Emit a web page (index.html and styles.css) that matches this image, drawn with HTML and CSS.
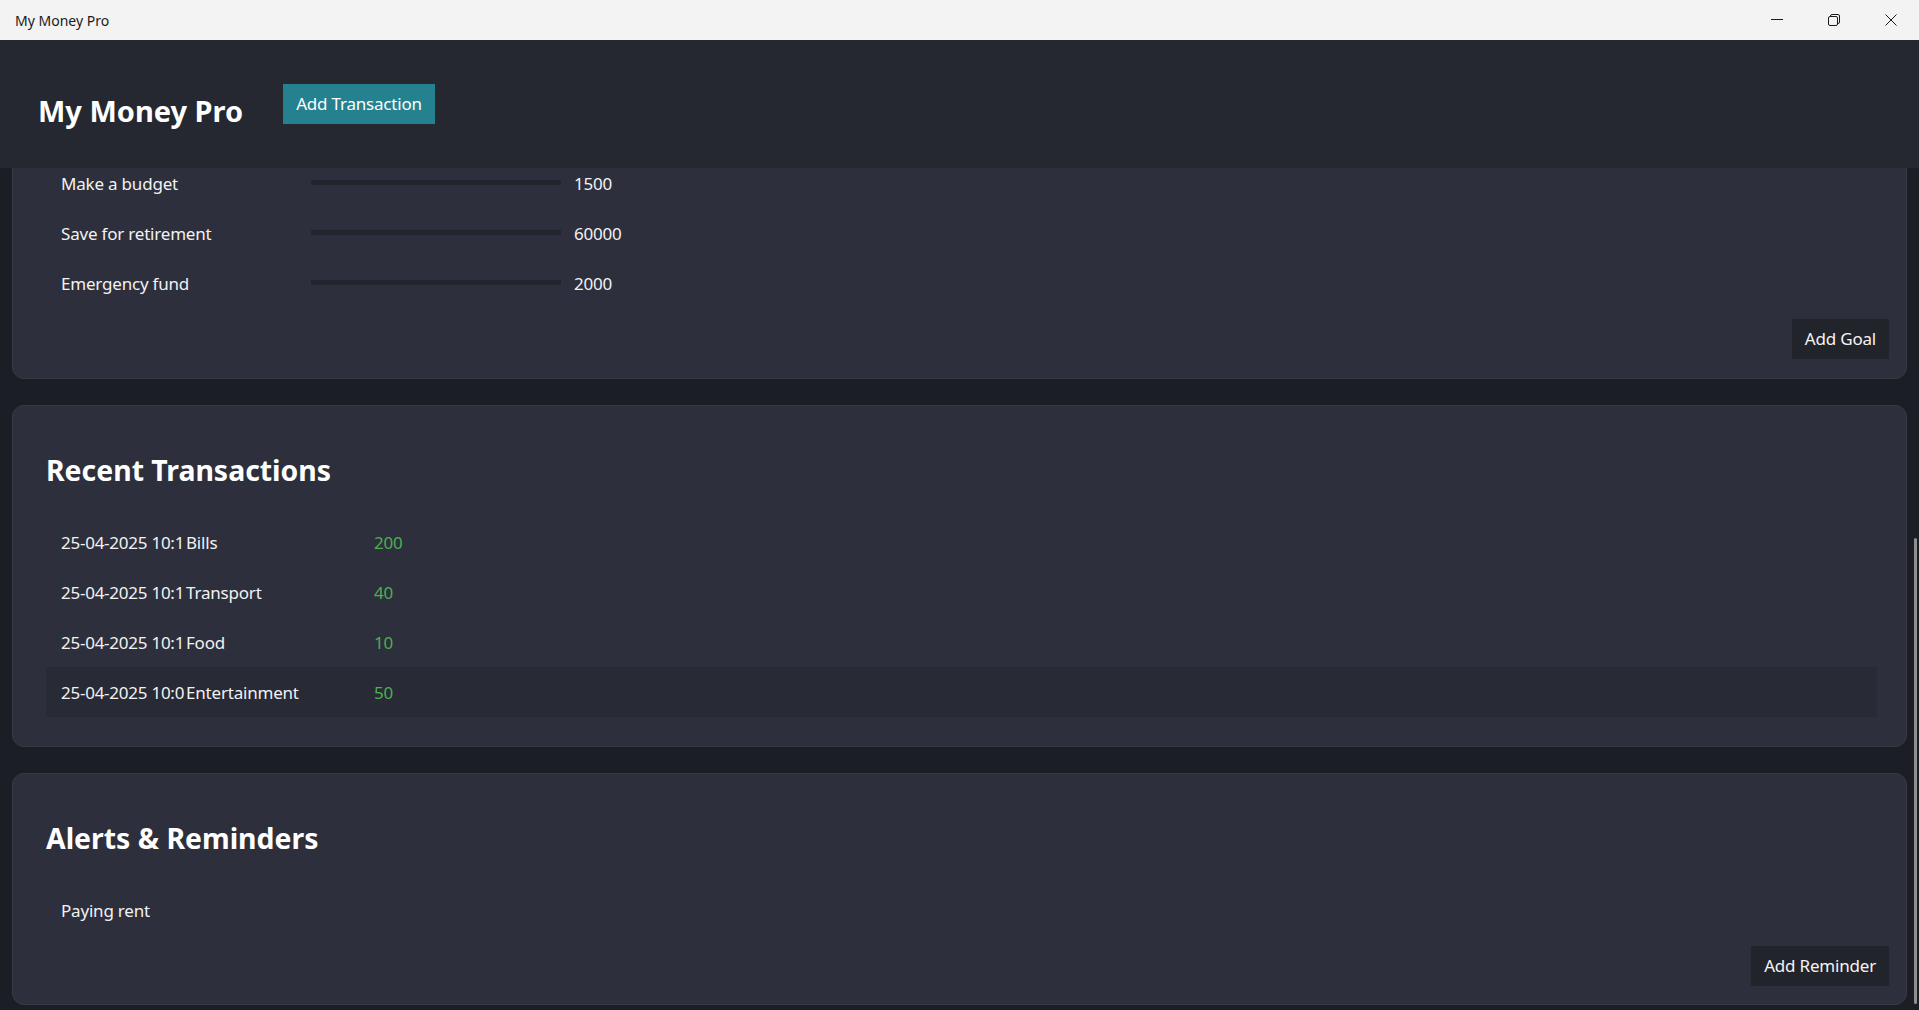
FILE: index.html
```html
<!DOCTYPE html>
<html lang="en">
<head>
<meta charset="utf-8">
<title>My Money Pro</title>
<link rel="stylesheet" href="styles.css">
</head>
<body>
<div class="window">
  <div class="titlebar">
    <span class="title">My Money Pro</span>
    <div class="controls">
      <span class="ctl">
        <svg width="12" height="12" viewBox="0 0 12 12"><path d="M0 5.5h12" stroke="#1b1b1b" stroke-width="1" fill="none"/></svg>
      </span>
      <span class="ctl">
        <svg width="12" height="12" viewBox="0 0 12 12" fill="none" stroke="#1b1b1b" stroke-width="1"><rect x="0.5" y="2.5" width="9" height="9" rx="1.5"/><path d="M2.5 2.5v-0.5a1.5 1.5 0 0 1 1.5-1.5h6a1.5 1.5 0 0 1 1.5 1.5v6a1.5 1.5 0 0 1-1.5 1.5h-0.5"/></svg>
      </span>
      <span class="ctl">
        <svg width="12" height="12" viewBox="0 0 12 12" fill="none" stroke="#1b1b1b" stroke-width="1"><path d="M0.5 0.5l11 11M11.5 0.5l-11 11"/></svg>
      </span>
    </div>
  </div>
  <div class="viewport">
    <header class="app-header">
      <h1 class="app-title">My Money Pro</h1>
      <button class="btn btn-primary">Add Transaction</button>
    </header>
    <main class="content">
      <section class="card card-goals">
        <ul class="list">
          <li class="row goal"><span class="goal-label">Make a budget</span><span class="bar"></span><span class="value">1500</span></li>
          <li class="row goal"><span class="goal-label">Save for retirement</span><span class="bar"></span><span class="value">60000</span></li>
          <li class="row goal"><span class="goal-label">Emergency fund</span><span class="bar"></span><span class="value">2000</span></li>
        </ul>
        <div class="actions"><button class="btn">Add Goal</button></div>
      </section>
      <section class="card">
        <h2 class="card-title">Recent Transactions</h2>
        <ul class="list">
          <li class="row"><span class="tx-date">25-04-2025 10:1</span><span class="tx-cat">Bills</span><span class="amount">200</span></li>
          <li class="row"><span class="tx-date">25-04-2025 10:1</span><span class="tx-cat">Transport</span><span class="amount">40</span></li>
          <li class="row"><span class="tx-date">25-04-2025 10:1</span><span class="tx-cat">Food</span><span class="amount">10</span></li>
          <li class="row row-active"><span class="tx-date">25-04-2025 10:0</span><span class="tx-cat">Entertainment</span><span class="amount">50</span></li>
        </ul>
      </section>
      <section class="card">
        <h2 class="card-title">Alerts &amp; Reminders</h2>
        <ul class="list">
          <li class="row"><span>Paying rent</span></li>
        </ul>
        <div class="actions"><button class="btn">Add Reminder</button></div>
      </section>
    </main>
    <div class="scrollbar"><div class="thumb"></div></div>
  </div>
</div>
</body>
</html>
```
FILE: styles.css
```css
* { box-sizing: border-box; }

html, body {
  margin: 0;
  padding: 0;
  width: 1919px;
  height: 1010px;
  overflow: hidden;
  font-family: "Noto Sans", "Open Sans", sans-serif;
}

.window {
  display: flex;
  flex-direction: column;
  width: 1919px;
  height: 1010px;
}

.titlebar {
  flex: none;
  height: 40px;
  background: #f3f3f3;
  display: flex;
  align-items: center;
}

.title {
  padding-left: 15px;
  font-size: 14px;
  color: #1b1b1b;
  margin-top: 1px;
}

.controls {
  margin-left: auto;
  display: flex;
}

.ctl {
  width: 57px;
  height: 40px;
  display: flex;
  align-items: center;
  justify-content: center;
}

.ctl svg { display: block; }

.viewport {
  position: relative;
  flex: 1;
  overflow: hidden;
  background: #1c1e26;
}

.app-header {
  position: absolute;
  top: 0;
  left: 0;
  right: 0;
  height: 128px;
  z-index: 2;
  background: #252831;
  display: flex;
  align-items: flex-start;
  padding: 44px 0 0 38px;
}

.app-title {
  margin: 7px 40px 0 0;
  font-size: 29px;
  line-height: 40px;
  font-weight: 700;
  color: #ffffff;
}

.btn {
  height: 40px;
  padding: 0 13px;
  border: 0;
  border-radius: 0;
  background: #22242c;
  color: #f4f4f4;
  font-family: inherit;
  font-size: 17px;
  letter-spacing: -0.2px;
  line-height: 40px;
  cursor: pointer;
}

.btn-primary {
  background: #24818f;
  color: #ffffff;
}

.content {
  display: flex;
  flex-direction: column;
  gap: 26px;
  padding: 105px 12px 0;
}

.card {
  background: #2d2f3c;
  border: 1px solid #383a48;
  border-radius: 12px;
  padding: 13px 17px 18px 33px;
  display: flex;
  flex-direction: column;
}

.card-goals {
  padding-top: 12px;
  padding-bottom: 19px;
}

.card-title {
  margin: 31px 0 27px 0;
  font-size: 28.4px;
  line-height: 40px;
  font-weight: 700;
  color: #ffffff;
}

.list {
  list-style: none;
  margin: 0 12px 11px 0;
  padding: 0;
}

.row {
  height: 50px;
  display: flex;
  align-items: center;
  padding: 0 15px;
  font-size: 17px;
  letter-spacing: -0.2px;
  color: #f2f2f2;
}

.row-active {
  background: #282a35;
}

.goal-label {
  flex: 0 0 250px;
}

.bar {
  flex: 0 0 250px;
  height: 5px;
  margin-top: -2px;
  background: #23252e;
  border-radius: 1px;
}

.value {
  margin-left: 13px;
}

.tx-date {
  flex: 0 0 125px;
  white-space: nowrap;
  letter-spacing: -0.25px;
}

.tx-cat {
  flex: 0 0 188px;
  white-space: nowrap;
}

.amount {
  color: #4caf50;
}

.actions {
  display: flex;
  justify-content: flex-end;
}

.scrollbar {
  position: absolute;
  top: 0;
  right: 0;
  bottom: 0;
  width: 7px;
  z-index: 3;
}

.thumb {
  position: absolute;
  top: 498px;
  right: 2px;
  width: 3px;
  height: 466px;
  border-radius: 2px;
  background: #8f8f8f;
}
```
